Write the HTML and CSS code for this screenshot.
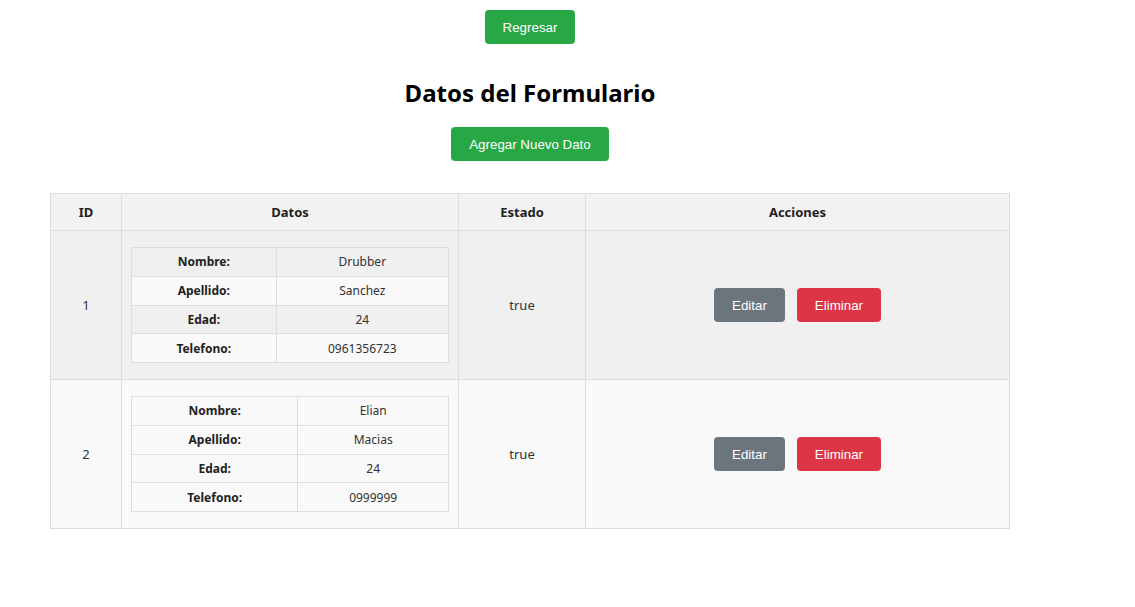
FILE: index.html
```html
<!DOCTYPE html>
<html lang="es">
<head>
<meta charset="utf-8">
<title>Datos del Formulario</title>
<link rel="stylesheet" href="styles.css">
</head>
<body>
<div class="page">
  <button class="btn btn-green">Regresar</button>
  <h2 class="title">Datos del Formulario</h2>
  <button class="btn btn-green">Agregar Nuevo Dato</button>
  <table class="grid">
    <thead>
      <tr><th class="c-id">ID</th><th class="c-datos">Datos</th><th class="c-estado">Estado</th><th class="c-acc">Acciones</th></tr>
    </thead>
    <tbody>
      <tr class="row-hover">
        <td>1</td>
        <td class="datos-cell">
          <table class="inner">
            <tr><th>Nombre:</th><td>Drubber</td></tr>
            <tr><th>Apellido:</th><td>Sanchez</td></tr>
            <tr><th>Edad:</th><td>24</td></tr>
            <tr><th>Telefono:</th><td>0961356723</td></tr>
          </table>
        </td>
        <td>true</td>
        <td><div class="actions"><button class="btn btn-gray">Editar</button><button class="btn btn-red">Eliminar</button></div></td>
      </tr>
      <tr>
        <td>2</td>
        <td class="datos-cell">
          <table class="inner">
            <tr><th>Nombre:</th><td>Elian</td></tr>
            <tr><th>Apellido:</th><td>Macias</td></tr>
            <tr><th>Edad:</th><td>24</td></tr>
            <tr><th>Telefono:</th><td>0999999</td></tr>
          </table>
        </td>
        <td>true</td>
        <td><div class="actions"><button class="btn btn-gray">Editar</button><button class="btn btn-red">Eliminar</button></div></td>
      </tr>
    </tbody>
  </table>
</div>
</body>
</html>
```
FILE: styles.css
```css
html, body {
  margin: 0;
  padding: 0;
  background: #fff;
}
body {
  font-family: "Noto Sans", "Open Sans", sans-serif;
  color: #333;
}
.page {
  width: 960px;
  margin-left: 50px;
  padding-top: 10px;
  text-align: center;
}
.btn {
  font-family: "Liberation Sans", Arial, sans-serif;
  font-size: 13.333px;
  color: #fff;
  border: none;
  border-radius: 4px;
  height: 34px;
  padding: 0 18px;
  cursor: pointer;
}
.btn-green { background: #28a745; }
.btn-gray { background: #6c757d; }
.btn-red { background: #dc3545; }
.title {
  font-size: 24px;
  font-weight: 700;
  color: #000;
  margin: 32px 0 18px;
  line-height: 33px;
}
.grid {
  width: 960px;
  margin-top: 32px;
  border-collapse: collapse;
  font-size: 13px;
}
.grid > thead > tr > th,
.grid > tbody > tr > td {
  border: 1px solid #ddd;
  text-align: center;
  vertical-align: middle;
}
.grid > thead > tr > th {
  background: #f2f2f2;
  font-weight: 700;
  height: 36px;
  padding: 0 8px;
  color: #222;
}
.c-id { width: 54px; }
.c-datos { width: 320px; }
.c-estado { width: 110px; }
.grid > tbody > tr { background: #f9f9f9; }
.grid > tbody > tr.row-hover { background: #f0f0f0; }
.grid > tbody > tr > td { padding: 16px 9px; }
.inner {
  width: 100%;
  border-collapse: collapse;
  font-size: 12px;
}
.inner th, .inner td {
  border: 1px solid #ddd;
  height: 27.75px;
  padding: 0 8px;
  text-align: center;
}
.inner th { font-weight: 700; color: #222; }
.inner tr:nth-child(even) { background: #f9f9f9; }
.actions {
  display: flex;
  justify-content: center;
  gap: 12px;
}
```
